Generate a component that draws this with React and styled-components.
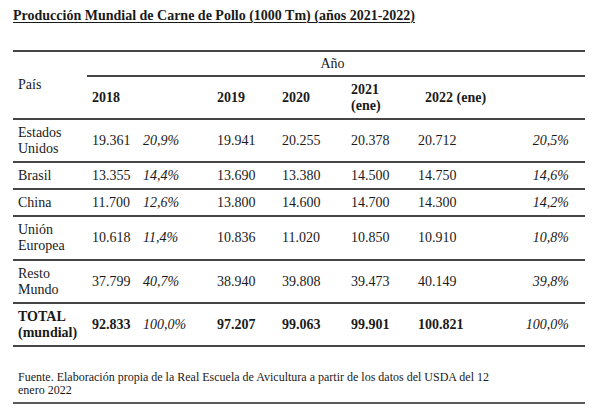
import React from "react";
import styled, { createGlobalStyle } from "styled-components";

const GlobalStyle = createGlobalStyle`
  html, body {
    margin: 0;
    padding: 0;
    background: #ffffff;
  }
  body {
    font-family: "Liberation Serif", "Times New Roman", serif;
    color: #1a1a1a;
  }
`;

const Page = styled.div`
  width: 600px;
  height: 415px;
  padding: 8px 15px 0 13px;
  box-sizing: border-box;
`;

const Title = styled.h1`
  margin: 0;
  font-size: 14px;
  line-height: 16px;
  font-weight: bold;
  text-decoration: underline;
  text-underline-offset: 2px;
  text-decoration-thickness: 1px;
`;

const Table = styled.div`
  margin-top: 26px;
  border-top: 2px solid #454545;
  font-size: 14px;
  line-height: 16px;
`;

const COLS = "74px 51px 74px 65px 69px 67px 87px 85px";

const Head = styled.div`
  display: grid;
  grid-template-columns: ${COLS};
  grid-template-rows: 25px 41px;
  border-bottom: 2px solid #454545;
`;

const Cell = styled.div`
  display: flex;
  align-items: center;
  padding-left: ${(p) => p.$pl ?? 5}px;
  padding-right: ${(p) => p.$pr ?? 0}px;
  justify-content: ${(p) => (p.$right ? "flex-end" : "flex-start")};
  font-weight: ${(p) => (p.$bold ? "bold" : "normal")};
  font-style: ${(p) => (p.$italic ? "italic" : "normal")};
  white-space: nowrap;
`;

const CountryHead = styled(Cell)`
  grid-row: 1 / span 2;
  grid-column: 1;
`;

const YearSpan = styled(Cell)`
  grid-row: 1;
  grid-column: 2 / span 7;
  justify-content: center;
  padding: 0 7px 0 0;
  border-bottom: 2px solid #454545;
`;

const YearHead = styled(Cell)`
  grid-row: 2;
  grid-column: ${(p) => p.$col};
  font-weight: bold;
  white-space: normal;
`;

const Row = styled.div`
  display: grid;
  grid-template-columns: ${COLS};
  height: ${(p) => p.$h}px;
  border-bottom: 2px solid #454545;
`;

const NameCell = styled(Cell)`
  white-space: normal;
`;

const Footer = styled.div`
  margin-top: 24px;
  padding: 0 0 5px 5px;
  font-size: 12px;
  line-height: 13px;
  border-bottom: 2px solid #5a5a5a;
`;

const rows = [
  { name: ["Estados", "Unidos"], h: 41, v: ["19.361", "20,9%", "19.941", "20.255", "20.378", "20.712", "20,5%"] },
  { name: ["Brasil"], h: 25, v: ["13.355", "14,4%", "13.690", "13.380", "14.500", "14.750", "14,6%"] },
  { name: ["China"], h: 25, v: ["11.700", "12,6%", "13.800", "14.600", "14.700", "14.300", "14,2%"] },
  { name: ["Unión", "Europea"], h: 42, v: ["10.618", "11,4%", "10.836", "11.020", "10.850", "10.910", "10,8%"] },
  { name: ["Resto", "Mundo"], h: 41, v: ["37.799", "40,7%", "38.940", "39.808", "39.473", "40.149", "39,8%"] },
  { name: ["TOTAL", "(mundial)"], h: 41, bold: true, v: ["92.833", "100,0%", "97.207", "99.063", "99.901", "100.821", "100,0%"] },
];

export default function App() {
  return (
    <>
      <GlobalStyle />
      <Page>
        <Title>Producción Mundial de Carne de Pollo (1000 Tm) (años 2021-2022)</Title>
        <Table>
          <Head>
            <CountryHead>País</CountryHead>
            <YearSpan>Año</YearSpan>
            <YearHead $col="2 / span 2">2018</YearHead>
            <YearHead $col="4">2019</YearHead>
            <YearHead $col="5">2020</YearHead>
            <YearHead $col="6">
              2021
              <br />
              (ene)
            </YearHead>
            <YearHead $col="7 / span 2" $pl={12}>
              2022 (ene)
            </YearHead>
          </Head>
          {rows.map((r) => (
            <Row key={r.name[0]} $h={r.h}>
              <NameCell $bold={r.bold}>
                <span>
                  {r.name.map((n, i) => (
                    <React.Fragment key={n}>
                      {i > 0 && <br />}
                      {n}
                    </React.Fragment>
                  ))}
                </span>
              </NameCell>
              <Cell $bold={r.bold}>{r.v[0]}</Cell>
              <Cell $italic>{r.v[1]}</Cell>
              <Cell $bold={r.bold}>{r.v[2]}</Cell>
              <Cell $bold={r.bold}>{r.v[3]}</Cell>
              <Cell $bold={r.bold}>{r.v[4]}</Cell>
              <Cell $bold={r.bold}>{r.v[5]}</Cell>
              <Cell $italic $right $pr={16}>
                {r.v[6]}
              </Cell>
            </Row>
          ))}
        </Table>
        <Footer>
          Fuente. Elaboración propia de la Real Escuela de Avicultura a partir de los datos del USDA del 12
          <br />
          enero 2022
        </Footer>
      </Page>
    </>
  );
}
